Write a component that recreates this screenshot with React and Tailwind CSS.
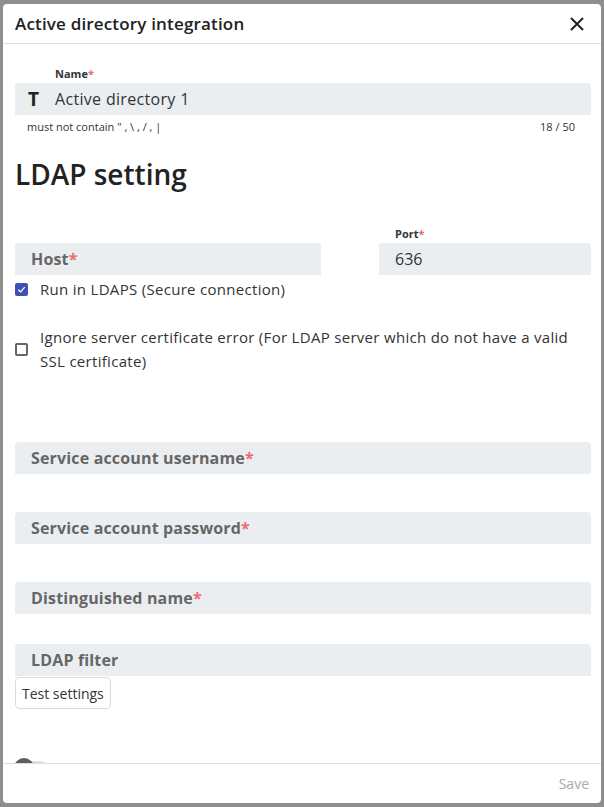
import React from 'react';

const font = { fontFamily: '"Open Sans", "Noto Sans", sans-serif' };

function Req() {
  return <span className="text-[#f06a6a]">*</span>;
}

function FilledField({ label, required }) {
  return (
    <div className="h-8 bg-[#ebeef1] rounded-t flex items-center px-4">
      <span className="text-[16px] font-bold text-[#666] tracking-[0.01em]">
        {label}
        {required && <Req />}
      </span>
    </div>
  );
}

export default function App() {
  return (
    <div className="h-[807px] bg-[#8e8e8e] p-[3px] pt-1 overflow-hidden" style={font}>
      <div className="h-[799px] w-[598px] bg-white rounded flex flex-col overflow-hidden">
        {/* header */}
        <div className="h-10 flex items-center justify-between pl-3 pr-4 border-b border-[#dedede] shrink-0">
          <h1 className="text-[17px] font-semibold text-[#222] tracking-[0.01em]">Active directory integration</h1>
          <svg width="16" height="16" viewBox="0 0 16 16" className="text-[#222]">
            <path d="M2 2 L14 14 M14 2 L2 14" stroke="currentColor" strokeWidth="2" />
          </svg>
        </div>

        {/* body */}
        <div className="flex-1 overflow-hidden pl-3 pr-[10px] pt-[22px]">
          <div className="pl-10 text-[11px] font-bold text-[#333] leading-4 mb-[1px]">
            Name<Req />
          </div>
          <div className="h-8 bg-[#ebeef1] rounded-t flex items-center">
            <span className="w-10 pl-[13px] text-[19px] font-bold text-[#222]">T</span>
            <span className="text-[16px] text-[#333] tracking-[0.02em]">Active directory 1</span>
          </div>
          <div className="flex justify-between px-3 pr-4 text-[11px] text-[#333] leading-4 mt-[4px]">
            <span>must not contain " , \ , / , |</span>
            <span>18 / 50</span>
          </div>

          <h2 className="text-[28px] font-semibold text-[#222] mt-[21px] leading-9">LDAP setting</h2>

          <div className="flex gap-[58px] mt-[34px]">
            <div className="flex-1 flex flex-col justify-end">
              <FilledField label="Host" required />
            </div>
            <div className="w-[212px]">
              <div className="pl-4 text-[11px] font-bold text-[#333] leading-4 mb-[1px]">
                Port<Req />
              </div>
              <div className="h-8 bg-[#ebeef1] rounded-t flex items-center px-4">
                <span className="text-[16px] text-[#333]">636</span>
              </div>
            </div>
          </div>

          <label className="flex items-center gap-3 mt-[6px] h-[16px]">
            <span className="w-[13px] h-[13px] bg-[#3f51b5] rounded-[2px] flex items-center justify-center">
              <svg width="9" height="9" viewBox="0 0 10 10">
                <path d="M1.5 5.2 L4 7.6 L8.6 2.4" stroke="white" strokeWidth="1.4" fill="none" />
              </svg>
            </span>
            <span className="text-[15px] text-[#333] tracking-[0.02em]">Run in LDAPS (Secure connection)</span>
          </label>

          <label className="flex items-center gap-3 mt-[28px]">
            <span className="w-[13px] h-[13px] border-2 border-[#666] rounded-[2px] shrink-0" />
            <span className="text-[15px] text-[#333] leading-6 pr-3 tracking-[0.02em]">
              Ignore server certificate error (For LDAP server which do not have a valid SSL certificate)
            </span>
          </label>

          <div className="mt-[69px]">
            <FilledField label="Service account username" required />
          </div>
          <div className="mt-[38px]">
            <FilledField label="Service account password" required />
          </div>
          <div className="mt-[38px]">
            <FilledField label="Distinguished name" required />
          </div>
          <div className="mt-[30px]">
            <FilledField label="LDAP filter" />
          </div>

          <button className="mt-[1px] h-[32px] px-[6px] border border-[#dcdcdc] rounded text-[14px] text-[#333] bg-white">
            Test settings
          </button>

          <div className="mt-[49px] flex items-center gap-3 h-5">
            <span className="relative w-8 h-[14px] bg-[#e0e0e0] rounded-full">
              <span className="absolute -left-[1px] -top-[3px] w-5 h-5 rounded-full bg-[#5f5f5f]" />
            </span>
            <span className="text-[15px] leading-5 pt-[4px] text-[#333]">Synchronize disabled users</span>
          </div>
        </div>

        {/* footer */}
        <div className="h-[40px] border-t border-[#dedede] flex items-center justify-end pr-3 shrink-0">
          <span className="text-[14px] text-[#aaa]">Save</span>
        </div>
      </div>
    </div>
  );
}
